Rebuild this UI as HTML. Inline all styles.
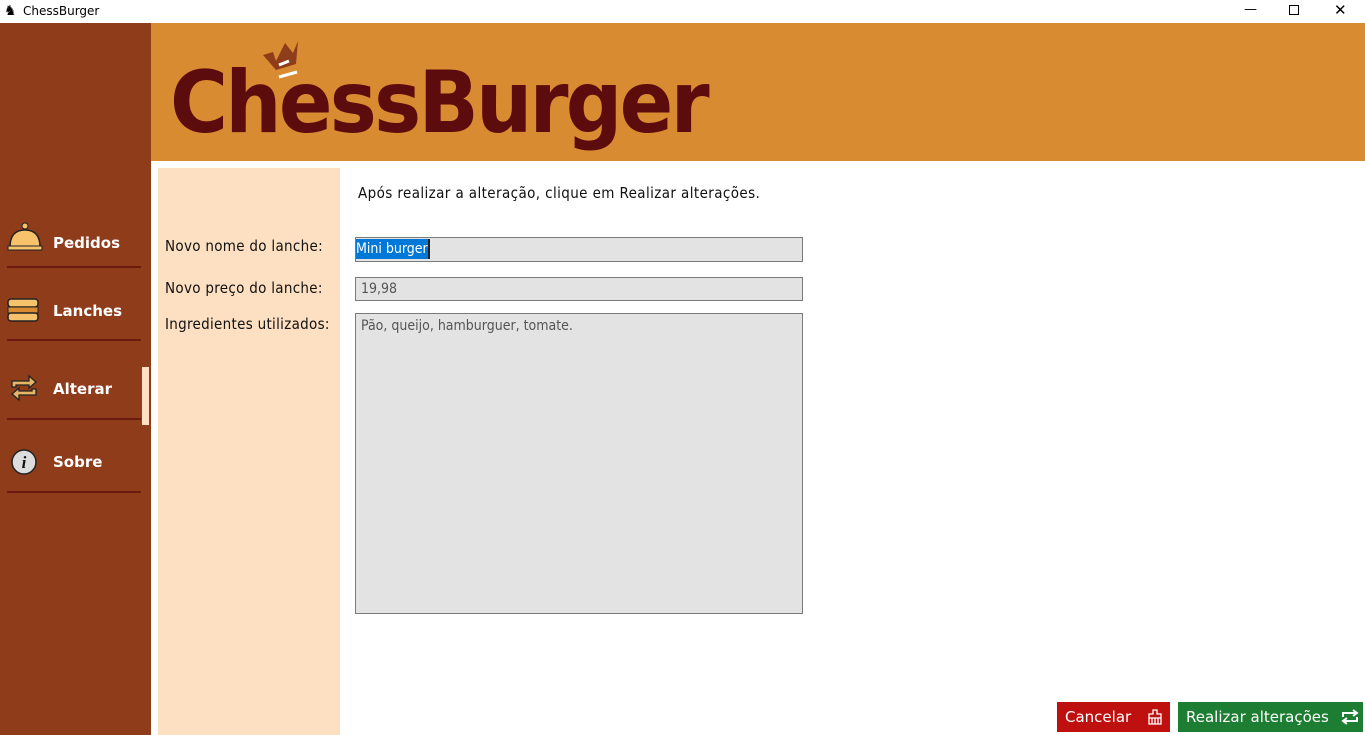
<!DOCTYPE html>
<html><head><meta charset="utf-8"><style>
*{margin:0;padding:0;box-sizing:border-box}
body{width:1365px;height:735px;overflow:hidden;background:#fff;font-family:"DejaVu Sans","Liberation Sans",sans-serif;position:relative}
.a{position:absolute}
.tb{left:0;top:0;width:1365px;height:23px;background:#fff;font-size:12px;color:#000}
.side{left:0;top:23px;width:151px;height:712px;background:#8f3c1b}
.hdr{left:151px;top:23px;width:1214px;height:138px;background:#d98b32}
.peach{left:158px;top:168px;width:182px;height:567px;background:#fde0c2}
.sep{left:7px;width:134px;height:2px;background:#6a1a0e}
.nav{left:53px;color:#fff;font-weight:bold;font-size:15px;font-family:"DejaVu Sans",sans-serif}
.lbl{left:165px;font-size:15px;color:#111;font-family:"DejaVu Sans Condensed","DejaVu Sans",sans-serif;letter-spacing:0.3px}
.inp{left:355px;width:448px;background:#e3e3e3;border:1px solid #7a7a7a;font-size:14px;color:#555;font-family:"DejaVu Sans Condensed","DejaVu Sans",sans-serif;padding-left:5px}
.btn{color:#fff;font-size:15px;height:30px;line-height:30px;font-family:"DejaVu Sans","Liberation Sans",sans-serif}
</style></head><body>
<div class="a tb"><span class="a" style="left:4px;top:3px;font-size:14px">♞</span><span class="a" style="left:23px;top:4px">ChessBurger</span>
<span class="a" style="left:1244px;top:2px;font-size:13px">—</span>
<span class="a" style="left:1289px;top:5px;width:10px;height:10px;border:1px solid #000"></span>
<span class="a" style="left:1334px;top:1px;font-size:15px">✕</span></div>
<div class="a side"></div>
<div class="a hdr"></div>
<div class="a" style="left:170px;top:48px;font-family:'DejaVu Sans',sans-serif;font-weight:bold;font-size:86px;color:#5c0c0c;letter-spacing:-3px;line-height:110px;transform:scaleX(0.92);transform-origin:left">ChessBurger</div>
<svg class="a" style="left:262px;top:40px" width="48" height="42" viewBox="0 0 48 42"><path d="M1 15 L11 12 L14 21 L23 3 L31 13 L36 1 L34 24 L14 30 Z" fill="#8f3c1b"/><path d="M17 25 L27 21" stroke="#fff" stroke-width="3"/><path d="M17 37 L35 32" stroke="#fff" stroke-width="3"/></svg>
<div class="a peach"></div>
<!-- sidebar -->
<svg class="a" style="left:7px;top:222px" width="36" height="30" viewBox="0 0 36 30"><circle cx="18" cy="4" r="3" fill="#f6c26b" stroke="#222"/><path d="M3 25 Q3 8 18 8 Q33 8 33 25Z" fill="#f6c26b" stroke="#222" stroke-width="1.5"/><rect x="1" y="24" width="34" height="4" fill="#f6c26b" stroke="#222"/></svg>
<div class="a nav" style="top:234px">Pedidos</div>
<div class="a sep" style="top:266px"></div>
<svg class="a" style="left:7px;top:298px" width="32" height="24" viewBox="0 0 32 24"><rect x="1" y="1" width="30" height="8" rx="3" fill="#f6c26b" stroke="#222" stroke-width="1.5"/><rect x="1" y="9" width="30" height="6" fill="#d98b32" stroke="#222"/><rect x="1" y="15" width="30" height="8" rx="3" fill="#f6c26b" stroke="#222" stroke-width="1.5"/></svg>
<div class="a nav" style="top:302px">Lanches</div>
<div class="a sep" style="top:339px"></div>
<svg class="a" style="left:10px;top:374px" width="28" height="28" viewBox="0 0 28 28"><path d="M2 13 V7 H19 V2 L26 8 L19 14 V11 H6 V13Z M26 15 V21 H9 V26 L2 20 L9 14 V17 H22 V15Z" fill="#e8b466" stroke="#222" stroke-width="1.3"/></svg>
<div class="a nav" style="top:380px">Alterar</div>
<div class="a" style="left:142px;top:367px;width:7px;height:58px;background:#fde0c2"></div>
<div class="a sep" style="top:418px"></div>
<svg class="a" style="left:11px;top:449px" width="26" height="26" viewBox="0 0 26 26"><circle cx="13" cy="13" r="12" fill="#ddd" stroke="#222" stroke-width="1.5"/><text x="13" y="19" text-anchor="middle" font-family="Liberation Serif" font-style="italic" font-weight="bold" font-size="17" fill="#111">i</text></svg>
<div class="a nav" style="top:453px">Sobre</div>
<div class="a sep" style="top:491px"></div>
<!-- form -->
<div class="a" style="left:358px;top:184px;font-size:15px;color:#111;font-family:'DejaVu Sans Condensed','DejaVu Sans',sans-serif;letter-spacing:0.4px">Após realizar a alteração, clique em Realizar alterações.</div>
<div class="a lbl" style="top:237px">Novo nome do lanche:</div>
<div class="a lbl" style="top:279px">Novo preço do lanche:</div>
<div class="a lbl" style="top:315px">Ingredientes utilizados:</div>
<div class="a inp" style="top:237px;height:25px;line-height:23px;padding-left:0"><span style="background:#0078d7;color:#fff;padding:2px 0;border-right:2px solid #222">Mini burger</span></div>
<div class="a inp" style="top:277px;height:24px;line-height:22px">19,98</div>
<div class="a inp" style="top:313px;height:301px;padding-top:4px">Pão, queijo, hamburguer, tomate.</div>
<div class="a btn" style="left:1057px;top:702px;width:113px;background:#bf1010;padding-left:8px">Cancelar
<svg class="a" style="left:90px;top:7px" width="16" height="16" viewBox="0 0 16 16" fill="none" stroke="#fff" stroke-width="1.3"><path d="M6 1H10V5H14V15H2V5H6Z M2 9H14 M5 9V15 M8 9V15 M11 9V15"/></svg></div>
<div class="a btn" style="left:1178px;top:702px;width:185px;background:#1d7d32;padding-left:8px">Realizar alterações
<svg class="a" style="left:163px;top:7px" width="18" height="16" viewBox="0 0 18 16" fill="none" stroke="#fff" stroke-width="2"><path d="M2 8V4H15 M12 1L16 4L12 7 M16 8V12H3 M6 9L2 12L6 15"/></svg></div>
</body></html>
